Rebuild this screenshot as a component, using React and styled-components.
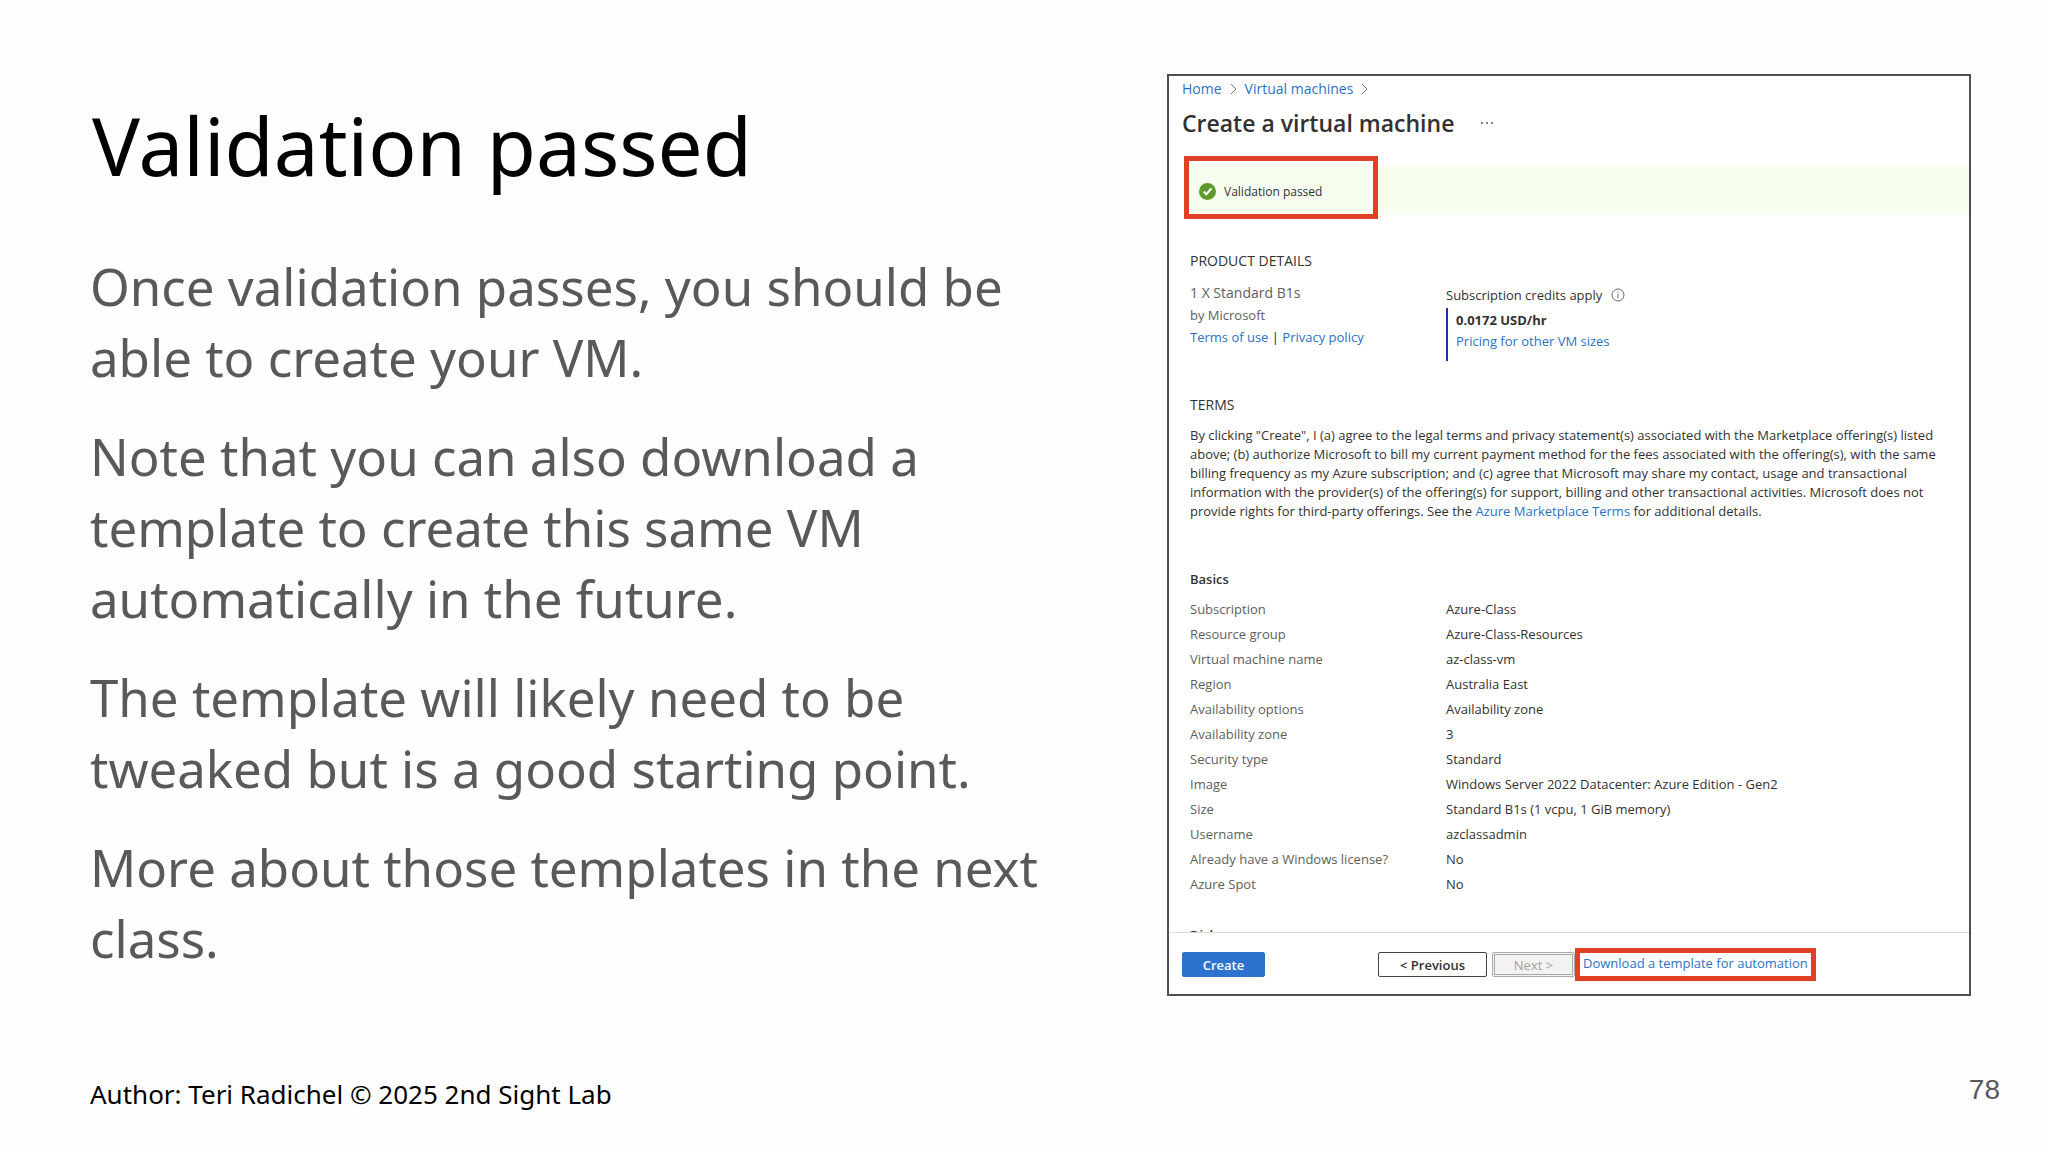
import React from 'react';
import styled, { createGlobalStyle } from 'styled-components';


const basics = [
    ['Subscription', 'Azure-Class'],
    ['Resource group', 'Azure-Class-Resources'],
    ['Virtual machine name', 'az-class-vm'],
    ['Region', 'Australia East'],
    ['Availability options', 'Availability zone'],
    ['Availability zone', '3'],
    ['Security type', 'Standard'],
    ['Image', 'Windows Server 2022 Datacenter: Azure Edition - Gen2'],
    ['Size', 'Standard B1s (1 vcpu, 1 GiB memory)'],
    ['Username', 'azclassadmin'],
    ['Already have a Windows license?', 'No'],
    ['Azure Spot', 'No'],
];

export default function App() {
    return (
        <Slide>
            <GlobalStyle />
            <Columns>
                <Notes>
                    <h1>Validation passed</h1>
                    <p>Once validation passes, you should be able to create your VM.</p>
                    <p>Note that you can also download a template to create this same VM automatically in the future.</p>
                    <p>The template will likely need to be tweaked but is a good starting point.</p>
                    <p>More about those templates in the next class.</p>
                </Notes>
                <Portal />
            </Columns>
            <SlideFooter>
                <span>Author: Teri Radichel © 2025 2nd Sight Lab</span>
                <PageNumber>78</PageNumber>
            </SlideFooter>
        </Slide>
    );
}

function Portal() {
    return (
        <PortalFrame>
            <Breadcrumb>
                <Link href='#home'>Home</Link>
                <Chevron />
                <Link href='#machines'>Virtual machines</Link>
                <Chevron />
            </Breadcrumb>
            <PortalTitle>
                <h2>Create a virtual machine</h2>
                <MoreButton type='button' aria-label='More'>
                    <svg width='14' height='4' viewBox='0 0 14 4' fill='#555'>
                        <circle cx='2' cy='2' r='1' />
                        <circle cx='7' cy='2' r='1' />
                        <circle cx='12' cy='2' r='1' />
                    </svg>
                </MoreButton>
            </PortalTitle>
            <StatusBar>
                <svg width='17' height='17' viewBox='0 0 17 17'>
                    <circle cx='8.5' cy='8.5' r='8.5' fill='#5f9a2c' />
                    <path d='M4.6 8.6 7.4 11.2 12.4 5.4' fill='none' stroke='#fff' strokeWidth='2.2' />
                </svg>
                Validation passed
                <StatusMarker />
            </StatusBar>

            <PortalBody>
                <SectionTitle>PRODUCT DETAILS</SectionTitle>
                <Product>
                    <Offer>
                        <OfferName>1 X Standard B1s</OfferName>
                        <p>by Microsoft</p>
                        <p>
                            <Link href='#terms'>Terms of use</Link>
                            <Divider> | </Divider>
                            <Link href='#privacy'>Privacy policy</Link>
                        </p>
                    </Offer>
                    <Credits>
                        <CreditsLabel>
                            Subscription credits apply
                            <svg width='14' height='14' viewBox='0 0 14 14' fill='none' stroke='#666'>
                                <circle cx='7' cy='7' r='6' />
                                <path d='M7 6v4.2M7 3.6v1.2' />
                            </svg>
                        </CreditsLabel>
                        <Price>
                            <strong>0.0172 USD/hr</strong>
                            <Link href='#pricing'>Pricing for other VM sizes</Link>
                        </Price>
                    </Credits>
                </Product>

                <SectionTitle>TERMS</SectionTitle>
                <Terms>
                    By clicking "Create", I (a) agree to the legal terms and privacy statement(s) associated with the Marketplace offering(s) listed<br />
                    above; (b) authorize Microsoft to bill my current payment method for the fees associated with the offering(s), with the same<br />
                    billing frequency as my Azure subscription; and (c) agree that Microsoft may share my contact, usage and transactional<br />
                    information with the provider(s) of the offering(s) for support, billing and other transactional activities. Microsoft does not<br />
                    provide rights for third-party offerings. See the <Link href='#marketplace'>Azure Marketplace Terms</Link> for additional details.
                </Terms>

                <GroupTitle>Basics</GroupTitle>
                <BasicsTable>
                    <tbody>
                        {basics.map(([label, value]) => (
                            <tr key={label}>
                                <th scope='row'>{label}</th>
                                <td>{value}</td>
                            </tr>
                        ))}
                    </tbody>
                </BasicsTable>
                <NextGroup>
                    <GroupTitle>Disks</GroupTitle>
                </NextGroup>
            </PortalBody>

            <Actions>
                <Button type='button' $primary>Create</Button>
                <Wizard>
                    <Button type='button' $wide>&lt; Previous</Button>
                    <Button type='button' disabled>Next &gt;</Button>
                </Wizard>
                <LinkMarker>
                    <Link href='#template'>Download a template for automation</Link>
                </LinkMarker>
            </Actions>
        </PortalFrame>
    );
}

function Chevron() {
    return (
        <svg width='7' height='12' viewBox='0 0 7 12' fill='none' stroke='#777'>
            <path d='M1 1l5 5-5 5' />
        </svg>
    );
}


const GlobalStyle = createGlobalStyle`
    *{
        box-sizing: border-box;
    }

    body{
        margin: 0;
        background-color: #fefefe;
        font-family: "Noto Sans", sans-serif;
    }

    h1, h2, h3, p{
        margin: 0;
    }
`;

const Slide = styled.div`
    min-height: 100vh;
    display: flex;
    flex-direction: column;
`;

const Columns = styled.main`
    flex: 1;
    display: grid;
    grid-template-columns: minmax(0, 977fr) minmax(0, 804fr);
    column-gap: 100px;
    align-items: start;
    padding: 74px 77px 0 90px;
`;

const Notes = styled.section`
    padding-top: 16px;
    color: #595959;

    h1{
        margin-bottom: 51px;
        padding-left: 2px;
        color: #000;
        font-size: 80px;
        font-weight: 400;
        line-height: 110px;
    }

    p{
        font-size: 51px;
        line-height: 71px;
    }

    p + p{
        margin-top: 28px;
    }
`;

const SlideFooter = styled.footer`
    display: flex;
    justify-content: space-between;
    align-items: center;
    padding: 0 48px 40px 90px;
    font-size: 26px;
    line-height: 36px;
`;

const PageNumber = styled.span`
    color: #595959;
    font-family: "Liberation Sans", sans-serif;
    font-size: 28px;
    line-height: 28px;
    padding-bottom: 8px;
`;

const PortalFrame = styled.section`
    border: 2px solid #505050;
    background-color: #fff;
    color: #323130;
    font-family: "Open Sans", sans-serif;
    font-size: 13px;
    line-height: 20px;
`;

const Link = styled.a`
    color: #2b72c4;
    text-decoration: none;
`;

const Breadcrumb = styled.nav`
    display: flex;
    align-items: center;
    gap: 8px;
    padding: 3px 13px 0;
    font-size: 14px;
`;

const PortalTitle = styled.header`
    display: flex;
    align-items: center;
    gap: 26px;
    padding: 8px 13px 26px;

    h2{
        font-size: 23px;
        font-weight: 600;
        line-height: 32px;
    }
`;

const MoreButton = styled.button`
    display: flex;
    padding: 0;
    border: 0;
    background: none;
`;

const StatusBar = styled.div`
    position: relative;
    display: flex;
    align-items: center;
    gap: 8px;
    height: 50px;
    margin-left: 15px;
    padding: 3px 15px 0;
    background-color: #f7feef;
    font-size: 12px;
`;

/* red frame drawn over the status bar */
const StatusMarker = styled.span`
    position: absolute;
    top: -9px;
    bottom: -4px;
    left: 0;
    width: 194px;
    border: 5px solid #e13f26;
`;

const PortalBody = styled.div`
    padding: 36px 21px 0;
`;

const SectionTitle = styled.h3`
    font-size: 14px;
    font-weight: 400;
    line-height: 20px;
`;

const Product = styled.div`
    display: grid;
    grid-template-columns: 256px 1fr;
    padding: 11px 0 34px;
`;

const Offer = styled.div`
    color: #605e5c;
    line-height: 22px;
`;

const OfferName = styled.p`
    font-size: 14px;
`;

const Divider = styled.span`
    color: #222;
`;

const Credits = styled.div`
    padding-top: 3px;
`;

const CreditsLabel = styled.div`
    display: flex;
    align-items: center;
    gap: 9px;
`;

const Price = styled.div`
    display: flex;
    flex-direction: column;
    margin-top: 3px;
    padding: 2px 0 9px 8px;
    border-left: 2px solid #1c2fc4;
    line-height: 21px;
`;

const Terms = styled.p`
    padding: 11px 0 48px;
    line-height: 19px;
    white-space: nowrap;
`;

const GroupTitle = styled.h3`
    font-size: 13px;
    font-weight: 600;
    line-height: 20px;
`;

const BasicsTable = styled.table`
    width: 100%;
    margin-top: 8px;
    border-collapse: collapse;
    line-height: 25px;

    th, td{
        padding: 0;
        text-align: left;
        font-weight: 400;
    }

    th{
        width: 256px;
        color: #605e5c;
    }
`;

/* only the top edge of the following group shows above the action bar */
const NextGroup = styled.div`
    height: 7px;
    margin-top: 28px;
    overflow: hidden;
`;

const Actions = styled.footer`
    display: flex;
    align-items: center;
    padding: 15px 13px 13px;
    border-top: 1px solid #dcdcdc;
`;

const Wizard = styled.div`
    display: flex;
    gap: 5px;
    margin-left: 113px;
`;

const Button = styled.button`
    width: ${({ $wide }) => $wide ? '109px' : '83px'};
    height: 25px;
    padding: 0;
    border: 1px solid ${({ $primary }) => $primary ? '#2b73cc' : '#444'};
    border-radius: 2px;
    background-color: ${({ $primary }) => $primary ? '#2b73cc' : '#fff'};
    color: ${({ $primary }) => $primary ? '#fff' : '#323130'};
    font-family: inherit;
    font-size: 13px;
    font-weight: 600;
    line-height: 20px;

    &:disabled{
        border: 3px double #aaa;
        background-color: #f3f2f1;
        color: #a19f9d;
        font-weight: 400;
    }
`;

const LinkMarker = styled.div`
    padding: 0 3px 3px;
    border: 5px solid #e13f26;
    background-color: #fff;
`;
